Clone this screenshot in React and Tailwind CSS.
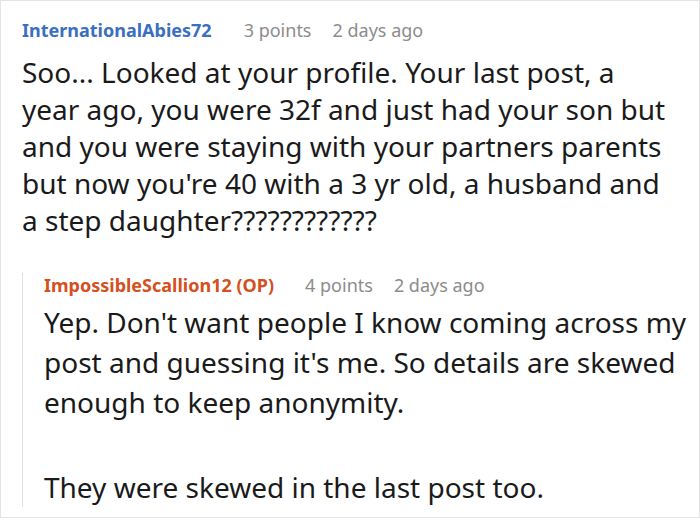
export default function App() {
  return (
    <div className="w-[700px] h-[518px] bg-white border border-[#e4e4e4] overflow-hidden" style={{ fontFamily: '"Noto Sans", sans-serif' }}>
      <div className="pl-[21px] pr-[8px] pt-[17px]">
        <div className="flex items-baseline text-[18px] leading-[24px]">
          <span className="font-bold text-[#3b6fc0]">InternationalAbies72</span>
          <span className="ml-[32px] text-[#8c8c8c]">3 points</span>
          <span className="ml-[21px] text-[#8c8c8c]">2 days ago</span>
        </div>
        <p className="mt-[12px] pr-[18px] text-[28px] leading-[37px] text-[#1a1a1b]">
          Soo... Looked at your profile. Your last post, a year ago, you were 32f and just had your son but and you were staying with your partners parents but now you're 40 with a 3 yr old, a husband and a step daughter????????????
        </p>
        <div className="mt-[45px] border-l border-[#e0e0e0] pl-[21px]">
          <div className="-mt-[11px] flex items-baseline text-[18px] leading-[24px]">
            <span className="font-bold text-[#d4501e]">ImpossibleScallion12 (OP)</span>
            <span className="ml-[31px] text-[#8c8c8c]">4 points</span>
            <span className="ml-[21px] text-[#8c8c8c]">2 days ago</span>
          </div>
          <div className="mt-[5px] text-[28px] leading-[40px] text-[#1a1a1b]">
            <p>Yep. Don't want people I know coming across my post and guessing it's me. So details are skewed enough to keep anonymity.</p>
            <p className="mt-[45px]">They were skewed in the last post too.</p>
          </div>
        </div>
      </div>
    </div>
  );
}
